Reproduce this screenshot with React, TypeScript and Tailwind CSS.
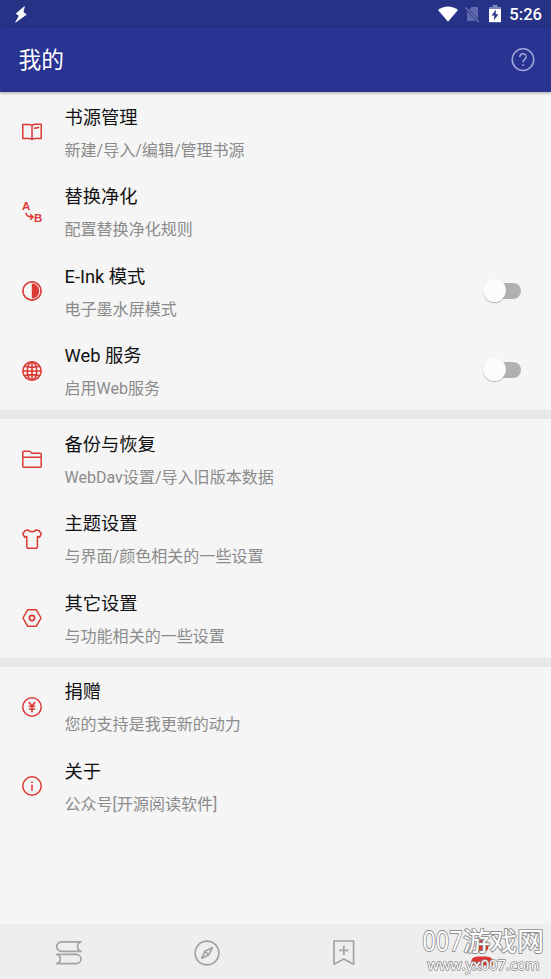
import type { ReactNode } from 'react'

interface Item {
  title: string
  desc: string
  icon: ReactNode
  hasSwitch?: boolean
}

const line = {
  width: 20,
  height: 20,
  viewBox: '0 0 20 20',
  fill: 'none',
  stroke: 'currentColor',
  strokeWidth: 1.5,
} as const

const BookIcon = () => (
  <svg {...line} strokeLinejoin="round">
    <path d="M.8 2.6h6.5L10 3.3l2.7-1.1h6.5v14.3h-6.5l-2.7.9-2.7-.9H.8zM10 3.1v14.2" />
    <path d="M12.6 6.3l4-.8" strokeLinecap="round" />
  </svg>
)

const ReplaceIcon = () => (
  <svg {...line} className="overflow-visible">
    <g fill="currentColor" stroke="none" className="font-['Liberation_Sans'] text-[11.5px] font-bold">
      <text x="0" y="8">A</text>
      <text x="12" y="19.5">B</text>
    </g>
    <path d="M3.8 10.7c.4 2.8 2.4 4.4 6.6 4.4M8.3 12.4l2.7 2.7-2.7 2.6" />
  </svg>
)

const ContrastIcon = () => (
  <svg {...line}>
    <circle cx="10" cy="10" r="9.1" strokeWidth="1.6" />
    <path d="M9.8 2.5a7.5 7.5 0 0 1 0 15z" fill="currentColor" stroke="none" />
  </svg>
)

const GlobeIcon = () => (
  <svg {...line} strokeWidth="1.6">
    <circle cx="10" cy="10" r="9.1" />
    <ellipse cx="10" cy="10" rx="4.7" ry="9.1" />
    <path d="M10 1v18M1 10h18M2.6 5.3c4.5 1.3 10.3 1.3 14.8 0M2.6 14.7c4.5-1.3 10.3-1.3 14.8 0" />
  </svg>
)

const FolderIcon = () => (
  <svg {...line} strokeLinejoin="round">
    <path d="M.8 17.2V3.2q0-1 1-1h5.8l2.3 2h8.3q1 0 1 1v12q0 1-1 1H1.8q-1 0-1-1zM.8 8.2h18.4" />
  </svg>
)

const ShirtIcon = () => (
  <svg {...line} strokeLinejoin="round">
    <path d="M6.2.9L3.2 1.5.8 4.8l1.8 3.4 2.2-.7v10.6q0 1.2 1.2 1.2h8.2q1.2 0 1.2-1.2V7.5l2.2.7 1.7-3.4-2.5-3.3-3-.6c-1.2 2.4-6.2 2.4-7.6 0z" />
  </svg>
)

const HexIcon = () => (
  <svg {...line} strokeLinejoin="round">
    <path d="M5.6 1.8h8.8l4.6 8.2-4.6 8.2H5.6L1 10z" />
    <circle cx="10" cy="10" r="2.6" strokeWidth="1.7" />
  </svg>
)

const YenIcon = () => (
  <svg {...line}>
    <circle cx="10" cy="10" r="9.2" />
    <path d="M6.9 5L10 9l3.1-4M10 9v6.3M6.8 9.3h6.4M6.8 12h6.4" strokeWidth="1.6" />
  </svg>
)

const InfoIcon = () => (
  <svg {...line}>
    <circle cx="10" cy="10" r="9.2" />
    <path d="M10 8.5v6.3M10 5.2v1.7" strokeWidth="1.5" />
  </svg>
)

const groups: Item[][] = [
  [
    { title: '书源管理', desc: '新建/导入/编辑/管理书源', icon: <BookIcon /> },
    { title: '替换净化', desc: '配置替换净化规则', icon: <ReplaceIcon /> },
    { title: 'E-Ink 模式', desc: '电子墨水屏模式', icon: <ContrastIcon />, hasSwitch: true },
    { title: 'Web 服务', desc: '启用Web服务', icon: <GlobeIcon />, hasSwitch: true },
  ],
  [
    { title: '备份与恢复', desc: 'WebDav设置/导入旧版本数据', icon: <FolderIcon /> },
    { title: '主题设置', desc: '与界面/颜色相关的一些设置', icon: <ShirtIcon /> },
    { title: '其它设置', desc: '与功能相关的一些设置', icon: <HexIcon /> },
  ],
  [
    { title: '捐赠', desc: '您的支持是我更新的动力', icon: <YenIcon /> },
    { title: '关于', desc: '公众号[开源阅读软件]', icon: <InfoIcon /> },
  ],
]

function Switch() {
  return (
    <div className="relative h-6 w-10 shrink-0">
      <div className="absolute top-1 right-0 h-4 w-[34px] rounded-full bg-[#b1b1b1]" />
      <div className="absolute top-0 left-0.5 size-[23px] rounded-full bg-[#fcfcfc] shadow-[0_1px_1px_rgba(0,0,0,0.25)]" />
    </div>
  )
}

function Row({ title, desc, icon, hasSwitch }: Item) {
  return (
    <div className="flex h-[79.5px] items-center pr-[30px] pl-[22px]">
      <div className="mt-[1px] mr-[22.5px] w-5 shrink-0 text-[#dc3a35]">{icon}</div>
      <div className="flex-1 pt-[3.6px] whitespace-nowrap">
        <div className="text-[18.3px] leading-[30px] text-[#111]">{title}</div>
        <div className="mt-[4px] text-[16.05px] leading-7 text-[#8b8b8b]">{desc}</div>
      </div>
      {hasSwitch && <Switch />}
    </div>
  )
}

function StatusBar() {
  return (
    <div className="flex h-7 items-center justify-between bg-[#263285] pr-[9px] pl-[15px] text-white">
      <svg width="12" height="17" viewBox="0 0 12 17" fill="currentColor">
        <path d="M9.4.6L1.2 7.6l3 2.2L.7 16.2 11.3 8.4 8 6.2z" stroke="currentColor" strokeWidth=".8" strokeLinejoin="round" />
      </svg>
      <div className="flex items-center">
        <svg width="20" height="17" viewBox="0 0 20 17" fill="currentColor">
          <path d="M0 4.1C5.6-.6 14.4-.6 20 4.1L10 15.8z" />
        </svg>
        <svg className="ml-[7px]" width="15" height="17" viewBox="0 0 15 17">
          <path d="M6.5 1H12q1 0 1 1v13H2V5.2z" fill="#5f69ae" />
          <path d="M.4 1.5L14 16.2" stroke="#263285" strokeWidth="2.6" />
          <path d="M.4 1.5L14 16.2" stroke="#6d76b5" strokeWidth="1.3" />
        </svg>
        <svg className="ml-[9px]" width="12" height="18" viewBox="0 0 12 18">
          <path d="M3.5 0h5v2H12v4H0V2h3.5z" fill="#7d85bd" />
          <path d="M0 4h12v13.2H0z" fill="#fff" />
          <path d="M7 4.8L2.5 10.6H5.4L4.8 15.2l4.7-5.9H6.6z" fill="#263285" />
        </svg>
        <span className="ml-[8px] pt-px text-[16.6px] leading-7 font-medium">5:26</span>
      </div>
    </div>
  )
}

function BottomNav() {
  return (
    <div className="relative grid h-[55px] grid-cols-4 items-center justify-items-center bg-[#eee] pt-0.5 text-[#a3a3a3]">
      <svg width="26" height="26" viewBox="0 0 26 26" fill="none" stroke="currentColor" strokeWidth="1.7" strokeLinejoin="round">
        <path d="M25 1.8H5.6a4.7 4.7 0 0 0 0 9.6H25c-4.6-1.6-4.6-8 0-9.6z" />
        <path d="M.8 14.4h19.6a4.6 4.6 0 0 1 0 9.2H.8c4.8-1.6 4.8-7.6 0-9.2z" />
      </svg>
      <svg width="26" height="26" viewBox="0 0 26 26" fill="none" stroke="currentColor" strokeWidth="1.7">
        <circle cx="13" cy="13" r="11.9" />
        <path d="M18.2 7.8L10.8 11.3 7.9 18.2 14.8 14.8zM10.8 11.3l4 3.5" strokeLinejoin="round" />
      </svg>
      <svg width="22" height="26" viewBox="0 0 22 26" fill="none" stroke="currentColor" strokeWidth="1.7" strokeLinejoin="round">
        <path d="M1 1h19.6v23.2l-9.8-5.2L1 24.2z" />
        <path d="M10.8 5.6v9.4M6.1 10.3h9.4" />
      </svg>
      <svg width="24" height="28" viewBox="0 0 24 28" fill="#d93630">
        <circle cx="12" cy="7.3" r="6.5" />
        <path d="M1 26.5v-2.6q0-6.4 7-6.4h8q7 0 7 6.4v2.6z" />
      </svg>
      {/* 水印 */}
      <svg className="absolute right-0 bottom-0 overflow-visible" width="136" height="55" viewBox="0 0 136 55">
        <g fill="#fff" stroke="#8c8c8c" strokeLinejoin="round" className="font-['Noto_Sans_CJK_SC',sans-serif] [paint-order:stroke]">
          <text x="7.5" y="26.5" fontSize="27" strokeWidth="1.8" textLength="40" lengthAdjust="spacingAndGlyphs" className="font-['Open_Sans',sans-serif]">007</text>
          <text x="48" y="27" fontSize="26.5" strokeWidth="1.8" textLength="81" lengthAdjust="spacingAndGlyphs">游戏网</text>
          <text x="12.5" y="46" fontSize="14" strokeWidth="1.5" textLength="112" lengthAdjust="spacingAndGlyphs" className="font-['Open_Sans',sans-serif]">www.yx007.com</text>
        </g>
      </svg>
    </div>
  )
}

export default function App() {
  return (
    <div className="flex h-[979px] w-[551px] flex-col overflow-hidden bg-[#f5f5f5] font-[Roboto,'Noto_Sans_CJK_SC',sans-serif]">
      <StatusBar />
      <header className="z-10 flex h-16 shrink-0 items-center justify-between bg-[#283392] pr-4 pl-[18.5px] shadow-[0_1px_3px_rgba(0,0,0,0.35)]">
        <h1 className="pt-0.5 text-[22.7px] leading-8 text-white">我的</h1>
        <svg width="24" height="24" viewBox="0 0 24 24" fill="none" stroke="#a0a7d8" strokeWidth="1.5">
          <circle cx="12" cy="11.6" r="10.8" />
          <path d="M8.8 9c0-4.3 6.4-4.2 6.4-.2 0 2.7-3.2 2.6-3.2 5.5M12 16.3v1.8" />
        </svg>
      </header>
      <main className="flex-1">
        {groups.map((items, i) => (
          <section key={i} className={i > 0 ? 'border-t-[9px] border-[#e8e8e8]' : ''}>
            {items.map(item => (
              <Row key={item.title} {...item} />
            ))}
          </section>
        ))}
      </main>
      <BottomNav />
    </div>
  )
}
